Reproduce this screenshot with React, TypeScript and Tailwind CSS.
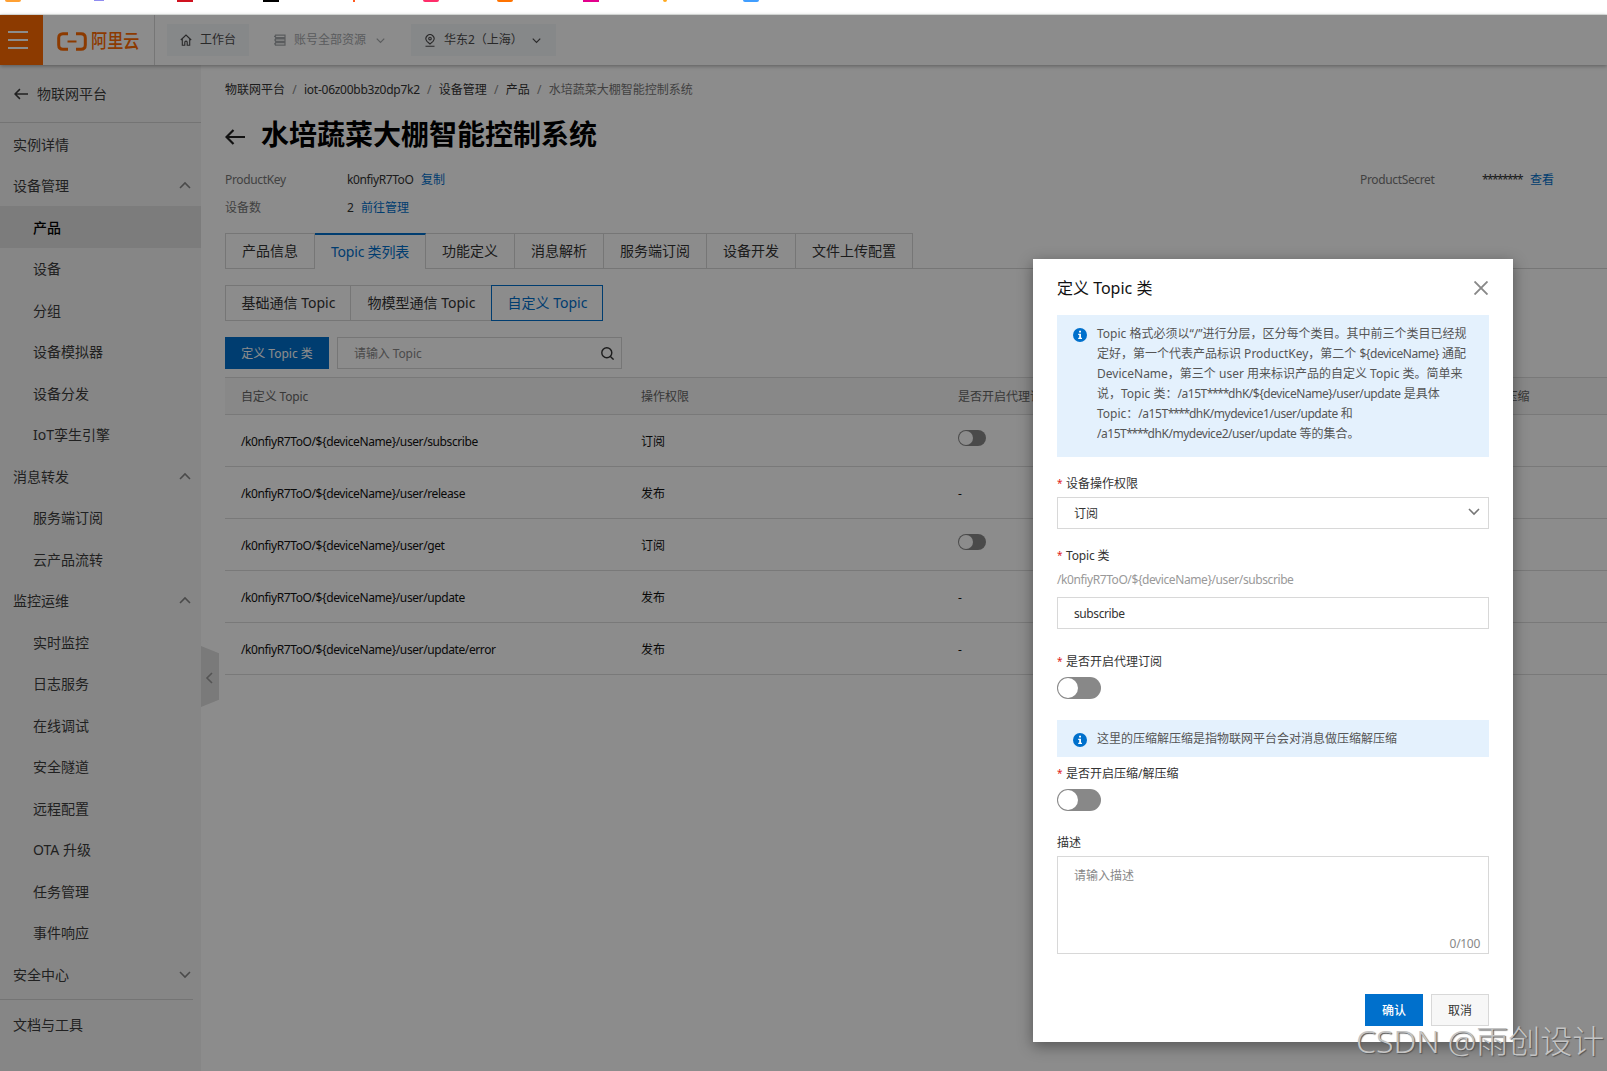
import { useState } from 'react';
import type { ReactNode } from 'react';

interface MenuItem {
  label: string;
  children?: string[];
  open?: boolean;
  active?: string;
}

interface TopicRow {
  topic: string;
  permission: string;
  proxy: boolean;
}

const menu: MenuItem[] = [
  { label: '实例详情' },
  {
    label: '设备管理',
    open: true,
    active: '产品',
    children: ['产品', '设备', '分组', '设备模拟器', '设备分发', 'IoT孪生引擎'],
  },
  { label: '消息转发', open: true, children: ['服务端订阅', '云产品流转'] },
  {
    label: '监控运维',
    open: true,
    children: ['实时监控', '日志服务', '在线调试', '安全隧道', '远程配置', 'OTA 升级', '任务管理', '事件响应'],
  },
  { label: '安全中心', open: false, children: [] },
];

const tabs = ['产品信息', 'Topic 类列表', '功能定义', '消息解析', '服务端订阅', '设备开发', '文件上传配置'];

const rows: TopicRow[] = [
  { topic: '/k0nfiyR7ToO/${deviceName}/user/subscribe', permission: '订阅', proxy: true },
  { topic: '/k0nfiyR7ToO/${deviceName}/user/release', permission: '发布', proxy: false },
  { topic: '/k0nfiyR7ToO/${deviceName}/user/get', permission: '订阅', proxy: true },
  { topic: '/k0nfiyR7ToO/${deviceName}/user/update', permission: '发布', proxy: false },
  { topic: '/k0nfiyR7ToO/${deviceName}/user/update/error', permission: '发布', proxy: false },
];

const noticeLines = [
  'Topic 格式必须以“/”进行分层，区分每个类目。其中前三个类目已经规',
  '定好，第一个代表产品标识 ProductKey，第二个 ${deviceName} 通配',
  'DeviceName，第三个 user 用来标识产品的自定义 Topic 类。简单来',
  '说，Topic 类：/a15T****dhK/${deviceName}/user/update 是具体',
  'Topic：/a15T****dhK/mydevice1/user/update 和',
  '/a15T****dhK/mydevice2/user/update 等的集合。',
];

// Tightens topic paths and masked parts, leaves the Chinese text alone
function NoticeLine({ text }: { text: string }) {
  return (
    <p>
      {text.split(/(\*{4}|[/$][\w/${}]{2,}|dhK[\w/${}]+)/).map((part, i) => {
        if (i % 2 === 0) return part;
        return (
          <span key={i} className={part[0] === '*' ? 'tracking-[-1.3px]' : 'tracking-[-0.46px]'}>
            {part}
          </span>
        );
      })}
    </p>
  );
}

function Chevron({ dir, className }: { dir: 'up' | 'down' | 'left'; className: string }) {
  const d = { up: 'M1 7l5-5 5 5', down: 'M1 2l5 5 5-5', left: 'M8 0L3 5l5 5' }[dir];
  return (
    <svg viewBox="0 0 12 9" className={className} fill="none" stroke="currentColor" strokeWidth="1.6" overflow="visible">
      <path d={d} />
    </svg>
  );
}

function BackArrow({ className }: { className: string }) {
  return (
    <svg viewBox="0 0 20 16" className={className} fill="none" stroke="currentColor" strokeWidth="2.2">
      <path d="M20 8H1.5M8.5 1L1.5 8l7 7" />
    </svg>
  );
}

function InfoIcon() {
  return (
    <svg viewBox="0 0 14 14" className="mt-[4px] h-3.5 w-3.5 shrink-0">
      <circle cx="7" cy="7" r="7" fill="#0070cc" />
      <path d="M6.1 2.8h1.9v1.7H6.1zM5.2 5.8H8v4h1v1.2H5.2V9.8h1V7h-1z" fill="#fff" />
    </svg>
  );
}

function BookmarkStrip() {
  return (
    <div className="flex h-[15px] items-start border-b border-[#e3e6e4] bg-white">
      <div className="ml-[5px] h-0.5 w-4 rounded-b-sm bg-[#ffa033]" />
      <div className="ml-[73px] h-px w-[10px] bg-[#8f8cf0]" />
      <div className="ml-[73px] h-0.5 w-4 bg-[#d0121f]" />
      <div className="ml-[70px] h-0.5 w-4 bg-black" />
      <div className="ml-[74px] h-0.5 w-0.5 bg-[#ff5a1f]" />
      <div className="ml-[68px] h-0.5 w-4 rounded-b-sm bg-[#ff2d6a]" />
      <div className="ml-[58px] h-0.5 w-4 rounded-b-sm bg-[#ff7300]" />
      <div className="ml-[70px] h-0.5 w-4 bg-[#e3008c]" />
      <div className="ml-[64px] h-0.5 w-1 rounded-b-sm bg-[#ffa91f]" />
      <div className="ml-[76px] h-0.5 w-4 rounded-b-sm bg-[#409eff]" />
    </div>
  );
}

function TopBar() {
  return (
    <header className="relative z-10 flex h-[50px] items-center bg-white text-xs text-[#4c4c4c] shadow-[0_1px_4px_rgba(0,0,0,0.35)]">
      <div className="flex h-full w-[43px] flex-col items-start justify-center gap-1.5 bg-[#ff6a00] pl-2">
        <i className="h-0.5 w-5 bg-white" />
        <i className="h-0.5 w-5 bg-white" />
        <i className="h-0.5 w-5 bg-white" />
      </div>
      <div className="flex h-full w-28 items-center border-r border-[#d8d8d8] pt-[2px] pl-[14px] text-[#ff6a00]">
        <svg viewBox="0 0 30 19" className="h-[19px] w-[30px]" fill="none" stroke="currentColor" strokeWidth="3">
          <path d="M11 1.7H6Q1.7 1.7 1.7 6v7q0 4.3 4.3 4.3h5M19 1.7h5q4.3 0 4.3 4.3v7q0 4.3-4.3 4.3h-5" />
          <path d="M10.5 9.5h9" strokeWidth="2" />
        </svg>
        <span className="mt-px ml-1 origin-left scale-x-[0.85] whitespace-nowrap text-[19px] leading-none font-medium">阿里云</span>
      </div>
      <div className="ml-3 flex h-8 w-[82px] items-center bg-[#f5f7fa] pl-[13px]">
        <svg viewBox="0 0 12 12" className="mr-[8px] h-3 w-3" fill="none" stroke="currentColor" strokeWidth="1.1">
          <path d="M.8 6L6 1l5.200 5M2.300 5v6.300h2.500V8.300q0-1.200 1.200-1.200t1.200 1.200v3h2.500V5" />
        </svg>
        工作台
      </div>
      <div className="ml-[25px] flex w-[137px] items-center text-[#a5a8ab]">
        <svg viewBox="0 0 12 12" className="mr-[8px] h-3 w-3" fill="none" stroke="currentColor" strokeWidth="1.2">
          <path d="M1.500 1.200h9.500v2.400H1.500zM1.500 4.900h9.500v2.400H1.500zM1.500 8.700h9.500v2.400H1.500zM0 2.400h1.500M0 6h1.500M0 9.900h1.500" />
        </svg>
        账号全部资源
        <Chevron dir="down" className="ml-[10px] h-[7px] w-[9px]" />
      </div>
      <div className="flex h-8 w-[145px] items-center bg-[#f5f7fa] pl-[13px]">
        <svg viewBox="0 0 12 13" className="mr-[8px] h-[13px] w-3" fill="none" stroke="currentColor" strokeWidth="1.1">
          <path d="M6 10L3 7.300a4 4 0 1 1 6 0zM1.500 12.300h9" />
          <circle cx="6" cy="4.600" r="1.300" />
        </svg>
        <span className="w-[88px] whitespace-nowrap">华东2（上海）</span>
        <Chevron dir="down" className="h-[7px] w-[9px]" />
      </div>
    </header>
  );
}

function Sidebar() {
  return (
    <aside className="w-[201px] shrink-0 bg-[#f5f5f5] text-sm text-[#3c3c3c]">
      <div className="flex h-[58px] items-center border-b border-[#d3d3d3] pl-[14px]">
        <BackArrow className="mr-[9px] h-[12px] w-[14px]" />
        物联网平台
      </div>
      <nav className="h-[876px]">
        {menu.map((item) => (
          <div key={item.label}>
            <div className="flex h-[41.5px] items-center justify-between pt-[2px] pr-[10px] pl-[13px]">
              {item.label}
              {item.children && (
                <Chevron dir={item.open ? 'up' : 'down'} className="-mt-px h-[9px] w-3 text-[#888]" />
              )}
            </div>
            {item.children?.map((child) => (
              <div
                key={child}
                className={
                  child === item.active
                    ? 'flex h-[41.5px] items-center bg-[#e2e2e2] pt-[2px] pl-[33px] font-medium text-black'
                    : 'flex h-[41.5px] items-center pt-[2px] pl-[33px]'
                }
              >
                {child}
              </div>
            ))}
          </div>
        ))}
      </nav>
      <div className="mr-2 border-t border-[#d3d3d3] pt-[15px] pl-[13px]">文档与工具</div>
    </aside>
  );
}

function Crumb({ children }: { children: ReactNode }) {
  return (
    <>
      <span>{children}</span>
      <span className="w-[19px] text-center text-[#888]">/</span>
    </>
  );
}

function SmallSwitch() {
  return (
    <div className="mb-2 h-4 w-7 rounded-full bg-[#888] p-px">
      <div className="h-3.5 w-3.5 rounded-full bg-white" />
    </div>
  );
}

function ProductPage() {
  const [tab, setTab] = useState('Topic 类列表');

  return (
    <main className="min-w-0 flex-1 pl-6 text-xs text-[#333]">
      <div className="mt-[14px] flex h-[22px] items-center">
        <Crumb>物联网平台</Crumb>
        <Crumb>
          <span className="tracking-[-0.26px]">iot-06z00bb3z0dp7k2</span>
        </Crumb>
        <Crumb>设备管理</Crumb>
        <Crumb>产品</Crumb>
        <span className="text-[#777]">水培蔬菜大棚智能控制系统</span>
      </div>

      <h1 className="mt-[14px] flex h-10 items-center text-[28px] font-bold text-black">
        <BackArrow className="mt-1 mr-4 h-4 w-5 text-[#222]" />
        水培蔬菜大棚智能控制系统
      </h1>

      <div className="mt-[11px] mb-px flex h-[27px] items-center">
        <span className="w-[122px] tracking-[-0.35px] text-[#777]">ProductKey</span>
        <span className="w-[74px] tracking-[-0.4px]">k0nfiyR7ToO</span>
        <a className="text-[#0070cc]">复制</a>
        <span className="ml-auto w-[122px] tracking-[-0.35px] text-[#777]">ProductSecret</span>
        <span className="w-12 tracking-[-1.6px]">********</span>
        <a className="mr-[53px] text-[#0070cc]">查看</a>
      </div>
      <div className="flex h-[27px] items-center">
        <span className="w-[122px] text-[#777]">设备数</span>
        <span className="w-[14px]">2</span>
        <a className="text-[#0070cc]">前往管理</a>
      </div>

      <div className="mt-3 flex h-9 text-sm">
        {tabs.map((name) => (
          <button
            key={name}
            type="button"
            onClick={() => setTab(name)}
            className={
              name === tab
                ? 'w-[111px] border-t-2 border-r border-r-[#d8d8d8] border-t-[#0070cc] tracking-[-0.2px] whitespace-nowrap text-[#0070cc]'
                : 'border-y border-r border-[#d8d8d8] px-4 first:w-[90px] first:border-l'
            }
          >
            {name}
          </button>
        ))}
        <div className="flex-1 border-b border-[#d8d8d8]" />
      </div>

      <div className="mt-4 flex h-9 text-sm">
        <button type="button" className="w-[126px] border border-[#d8d8d8] pl-px">基础通信 Topic</button>
        <button type="button" className="w-[140px] border-y border-[#d8d8d8] pl-px">物模型通信 Topic</button>
        <button type="button" className="w-28 border border-[#0070cc] pl-px text-[#0070cc]">自定义 Topic</button>
      </div>

      <div className="mt-4 flex h-8 gap-2">
        <button type="button" className="w-[104px] bg-[#0070cc] pt-px text-white">定义 Topic 类</button>
        <div className="flex w-[285px] items-center justify-between border border-[#d8d8d8] pt-px pr-[7px] pl-4">
          <span className="tracking-[-0.1px] text-[#888]">请输入 Topic</span>
          <svg viewBox="0 0 13 13" className="h-[13px] w-[13px]" fill="none" stroke="currentColor" strokeWidth="1.4">
            <circle cx="5.800" cy="5.800" r="5" />
            <path d="M9.400 9.400l3.200 3.200" />
          </svg>
        </div>
      </div>

      <div className="mt-2">
        <div className="grid h-[38px] grid-cols-[400px_317px_459px_1fr] items-center border-y border-[#dcdcdc] bg-[#f7f7f7] pt-[2px] pl-4 text-[#666]">
          <span className="tracking-[-0.15px]">自定义 Topic</span>
          <span>操作权限</span>
          <span>是否开启代理订阅</span>
          <span className="whitespace-nowrap">是否开启压缩/解压缩</span>
        </div>
        {rows.map((row) => (
          <div
            key={row.topic}
            className="grid h-[52px] grid-cols-[400px_317px_459px_1fr] items-center border-b border-[#dcdcdc] pt-[2px] pl-4 text-[#111]"
          >
            <span className="tracking-[-0.4px]">{row.topic}</span>
            <span>{row.permission}</span>
            {row.proxy ? <SmallSwitch /> : <span>-</span>}
          </div>
        ))}
      </div>
    </main>
  );
}

function FieldLabel({ children }: { children: ReactNode }) {
  return (
    <div className="flex h-5 items-center">
      <span className="w-[9px] text-[10px] text-[#e02020]">*</span>
      {children}
    </div>
  );
}

function Switch() {
  const [on, setOn] = useState(false);
  return (
    <button
      type="button"
      onClick={() => setOn(!on)}
      className={
        on
          ? 'flex h-[22px] w-11 justify-end rounded-full bg-[#0070cc] p-px'
          : 'flex h-[22px] w-11 rounded-full bg-[#888] p-px'
      }
    >
      <span className="h-5 w-5 rounded-full bg-white" />
    </button>
  );
}

function TopicDialog() {
  return (
    <div className="absolute top-[259px] left-[1033px] h-[783px] w-[480px] bg-white px-6 text-xs text-[#333] shadow-[0_4px_14px_rgba(0,0,0,0.4)]">
      <div className="flex h-14 items-center justify-between pt-px pr-px text-base text-[#111]">
        定义 Topic 类
        <svg viewBox="0 0 14 14" className="h-3.5 w-3.5 text-[#888]" fill="none" stroke="currentColor" strokeWidth="1.9">
          <path d="M.5.5l13 13M13.500.5l-13 13" />
        </svg>
      </div>

      <div className="flex h-[142px] bg-[#e4f1fd] pt-[9px] pl-4 text-[#555]">
        <InfoIcon />
        <div className="ml-[10px] leading-5 whitespace-nowrap">
          {noticeLines.map((line) => (
            <NoticeLine key={line} text={line} />
          ))}
        </div>
      </div>

      <div className="mt-[17px]">
        <FieldLabel>设备操作权限</FieldLabel>
        <div className="mt-[3px] flex h-8 items-center justify-between border border-[#d8d8d8] pt-px pr-2 pl-4">
          订阅
          <Chevron dir="down" className="-mt-[4px] h-[9px] w-3 text-[#777]" />
        </div>
      </div>

      <div className="mt-[17px]">
        <FieldLabel>
          <span className="tracking-[-0.15px]">Topic 类</span>
        </FieldLabel>
        <p className="mt-1 h-5 leading-5 tracking-[-0.41px] text-[#999]">{'/k0nfiyR7ToO/${deviceName}/user/subscribe'}</p>
        <input
          defaultValue="subscribe"
          className="mt-[7px] block h-8 w-full border border-[#d8d8d8] pt-px pl-4 tracking-[-0.4px] outline-none"
        />
      </div>

      <div className="mt-[23px]">
        <FieldLabel>是否开启代理订阅</FieldLabel>
        <div className="mt-[5px]">
          <Switch />
        </div>
      </div>

      <div className="mt-[21px] flex h-[37px] bg-[#e4f1fd] pt-[9px] pl-4 text-[#555]">
        <InfoIcon />
        <p className="ml-[10px] leading-5">这里的压缩解压缩是指物联网平台会对消息做压缩解压缩</p>
      </div>

      <div className="mt-[7px]">
        <FieldLabel>是否开启压缩/解压缩</FieldLabel>
        <div className="mt-[5px]">
          <Switch />
        </div>
      </div>

      <div className="mt-[22px]">
        <div className="h-5 leading-5">描述</div>
        <div className="mt-[3px] flex h-[98px] flex-col justify-between border border-[#d8d8d8] pt-[9px] pr-2 pl-4">
          <span className="leading-5 text-[#888]">请输入描述</span>
          <span className="-mb-px self-end leading-5 tracking-[-0.3px] text-[#888]">0/100</span>
        </div>
      </div>

      <div className="mt-10 flex justify-end gap-2">
        <button type="button" className="h-8 w-[58px] bg-[#0070cc] pt-[2px] font-medium text-white">确认</button>
        <button type="button" className="h-8 w-[58px] border border-[#d8d8d8] bg-[#f7f7f7] pt-[2px]">取消</button>
      </div>
    </div>
  );
}

export default function App() {
  return (
    <div className="relative h-[1071px] w-[1607px] overflow-hidden bg-white font-['Noto_Sans','Noto_Sans_CJK_SC',sans-serif]">
      <BookmarkStrip />
      <TopBar />
      <div className="relative flex h-[1006px]">
        <Sidebar />
        <ProductPage />
        <div className="absolute top-[581px] left-[201px] flex h-[61px] w-[18px] items-center justify-center bg-[#dedede] pt-[2px] text-[#999] [clip-path:polygon(0_0,100%_12%,100%_88%,0_100%)]">
          <Chevron dir="left" className="h-[9px] w-3" />
        </div>
      </div>

      <div className="absolute inset-x-0 top-[15px] bottom-0 z-20 bg-black/45" />
      <div className="absolute inset-0 z-30">
        <TopicDialog />
        <div className="absolute top-[1019px] left-[1356px] flex text-[32px] leading-[44px] font-light whitespace-nowrap text-[#c4c4c4] [text-shadow:1px_1px_1px_#555]">
          CSDN @雨创设计
        </div>
      </div>
    </div>
  );
}
